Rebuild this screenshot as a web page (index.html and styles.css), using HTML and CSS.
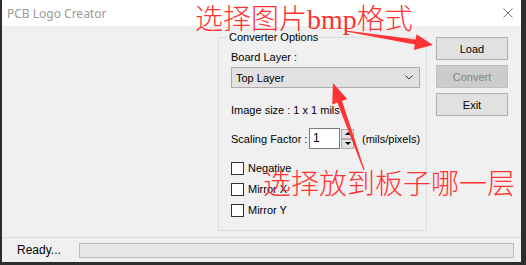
FILE: index.html
```html
<!DOCTYPE html>
<html>
<head>
<meta charset="utf-8">
<link rel="stylesheet" href="styles.css">
</head>
<body>
<div class="window">
  <div class="titlebar">
    <span class="title">PCB Logo Creator</span>
    <svg class="close" viewBox="0 0 10 10"><path d="M0.5 0.5L9.5 9.5M9.5 0.5L0.5 9.5" stroke="#777" stroke-width="1" fill="none"/></svg>
  </div>
  <div class="main">
    <div class="preview"></div>
    <div class="group">
      <div class="group-title">Converter Options</div>
      <div class="lbl board-lbl">Board Layer :</div>
      <div class="select">
        <span>Top Layer</span>
        <svg class="chev" viewBox="0 0 8 5"><polyline points="0.5,0.5 4,4 7.5,0.5" stroke="#333" stroke-width="1" fill="none"/></svg>
      </div>
      <div class="lbl size-lbl">Image size : 1 x 1 mils</div>
      <div class="scale-row">
        <span class="scale-lbl">Scaling Factor :</span>
        <div class="input">1</div>
        <div class="spin"><div class="spin-btn up"></div><div class="spin-btn down"></div></div>
        <span class="units">(mils/pixels)</span>
      </div>
      <div class="checks">
        <div class="check"><span class="box"></span>Negative</div>
        <div class="check"><span class="box"></span>Mirror X</div>
        <div class="check"><span class="box"></span>Mirror Y</div>
      </div>
    </div>
    <div class="buttons">
      <div class="btn">Load</div>
      <div class="btn disabled">Convert</div>
      <div class="btn">Exit</div>
    </div>
  </div>
  <div class="status">
    <span class="ready">Ready...</span>
    <div class="progress"></div>
  </div>
</div>
<div class="annot a1">选择图片bmp格式</div>
<div class="annot a2">选择放到板子哪一层</div>
<svg class="arrows" width="526" height="265" viewBox="0 0 526 265">
  <polygon fill="#ff3333" points="346,30.6 415.6,39.6 416.5,34.2 433,45 413.9,50 414.8,44.6 346,31.6"/>
  <polygon fill="#ff3333" points="363.5,170.2 337.3,102.6 332.2,104.5 333,83 347.2,99.1 342.1,101 364.5,169.8"/>
</svg>
</body>
</html>
```
FILE: styles.css
```css
* { box-sizing: border-box; }
html, body { margin: 0; padding: 0; }
body {
  background: #2d2d2d;
  width: 526px;
  height: 265px;
  overflow: hidden;
  position: relative;
  font-family: "Liberation Sans", Arial, sans-serif;
  font-size: 11px;
  color: #000;
}
.window {
  margin: 0 5px 3px 2px;
  height: 262px;
  background: #f0f0f0;
  display: flex;
  flex-direction: column;
}
.titlebar {
  height: 26px;
  flex: none;
  background: #fff;
  display: flex;
  align-items: center;
  justify-content: space-between;
  padding: 0 8px 0 5px;
}
.title {
  font-family: "Noto Sans", sans-serif;
  font-size: 12px;
  color: #999;
}
.close { width: 10px; height: 10px; display: block; }
.main {
  height: 211px;
  flex: none;
  display: flex;
  padding-top: 11px;
}
.preview { width: 216px; flex: none; }
.group {
  width: 209px;
  height: 194px;
  flex: none;
  border: 1px solid #dcdcdc;
  padding: 0 0 0 12px;
}
.group-title {
  display: table;
  margin: -7px 0 0 -3px;
  padding: 0 1px;
  line-height: 13px;
  background: #f0f0f0;
}
.lbl { line-height: 13px; }
.board-lbl { margin-top: 7px; }
.select {
  margin-top: 3px;
  width: 189px;
  height: 21px;
  background: #e1e1e1;
  border: 1px solid #adadad;
  display: flex;
  align-items: center;
  justify-content: space-between;
  padding: 0 6px 0 4px;
}
.chev { width: 8px; height: 5px; display: block; }
.size-lbl { margin-top: 16px; }
.scale-row {
  margin-top: 11px;
  height: 21px;
  display: flex;
  align-items: center;
}
.scale-lbl { width: 78px; flex: none; }
.input {
  width: 31px;
  height: 21px;
  border: 1px solid #7a7a7a;
  background: #fff;
  padding-left: 3px;
  line-height: 19px;
  font-size: 12px;
}
.spin {
  margin-left: 1px;
  width: 13px;
  display: flex;
  flex-direction: column;
}
.spin-btn {
  height: 10px;
  background: #e1e1e1;
  border: 1px solid #adadad;
  display: flex;
  align-items: center;
  justify-content: center;
}
.up::after {
  content: "";
  border-left: 3px solid transparent;
  border-right: 3px solid transparent;
  border-bottom: 3px solid #000;
}
.down::after {
  content: "";
  border-left: 3px solid transparent;
  border-right: 3px solid transparent;
  border-top: 3px solid #000;
}
.units { margin-left: 8px; }
.checks {
  margin-top: 13px;
  display: flex;
  flex-direction: column;
  gap: 8px;
}
.check {
  height: 13px;
  line-height: 13px;
  display: flex;
  align-items: center;
}
.box {
  width: 13px;
  height: 13px;
  border: 1px solid #333;
  background: #fff;
  margin-right: 4px;
  flex: none;
}
.buttons {
  margin-left: 9px;
  display: flex;
  flex-direction: column;
  gap: 5px;
}
.btn {
  width: 72px;
  height: 23px;
  background: #e1e1e1;
  border: 1px solid #adadad;
  display: flex;
  align-items: center;
  justify-content: center;
}
.btn.disabled {
  background: #cccccc;
  border-color: #bfbfbf;
  color: #838383;
}
.status {
  flex: 1;
  border-top: 1px solid #dadada;
  display: flex;
  align-items: flex-start;
  padding: 5px 0 0 15px;
}
.ready {
  width: 62px;
  font-size: 12px;
  line-height: 15px;
}
.progress {
  width: 435px;
  height: 15px;
  background: #e6e6e6;
  border: 1px solid #bcbcbc;
}
.annot {
  position: absolute;
  color: #ff3333;
  font-family: "Liberation Serif", "Noto Sans CJK SC", serif;
  font-size: 28px;
  line-height: 28px;
  font-weight: 300;
  white-space: nowrap;
}
.a1 { left: 195px; top: 6px; }
.a2 { left: 263px; top: 171px; }
.arrows {
  position: absolute;
  left: 0;
  top: 0;
  pointer-events: none;
}
```
